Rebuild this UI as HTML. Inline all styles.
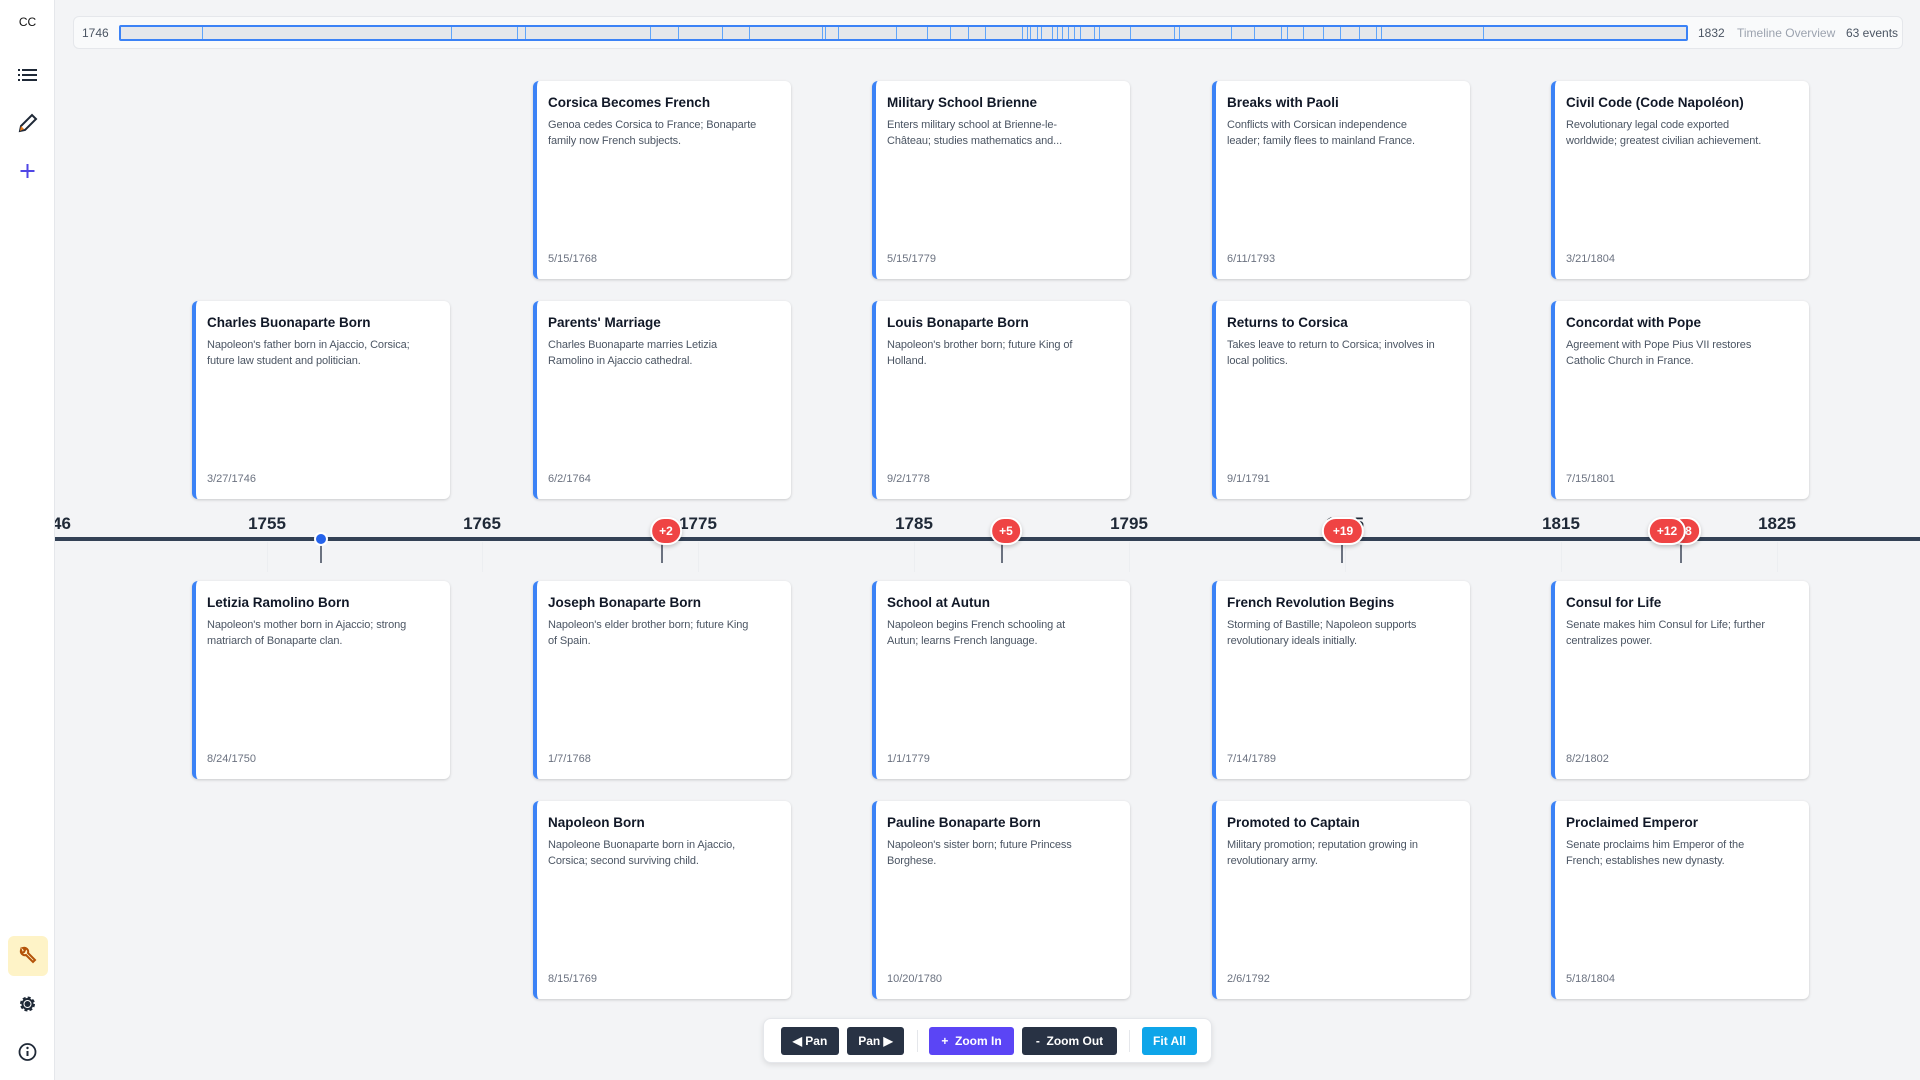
<!DOCTYPE html>
<html><head><meta charset="utf-8"><style>
*{box-sizing:border-box;margin:0;padding:0}
body{width:1920px;height:1080px;background:#f3f4f6;font-family:"Liberation Sans",sans-serif;position:relative;overflow:hidden}
.side{position:absolute;left:0;top:0;width:55px;height:1080px;background:#fff;border-right:1px solid #e5e7eb;z-index:5}
.ic{position:absolute;left:0;width:55px;text-align:center}
.ov{position:absolute;left:73px;top:16px;width:1830px;height:33px;background:#f9fafb;border:1px solid #e5e7eb;border-radius:6px}
.track{position:absolute;left:45px;top:8px;width:1569px;height:16px;background:#e5e7eb;border:2px solid #3b82f6;border-radius:2px}
.track i{position:absolute;top:0;width:1px;height:12px;background:#60a5fa}
.ovt{position:absolute;top:9px;font-size:12px;color:#4b5563}
.card{position:absolute;width:258px;height:198px;background:#fff;border-left:4px solid #3b82f6;border-radius:6px;box-shadow:0 1px 3px rgba(0,0,0,.12),0 1px 2px rgba(0,0,0,.06);padding:0 0 0 11px}
.card h3{position:absolute;top:14px;left:11px;font-size:13.5px;font-weight:bold;color:#111827;white-space:nowrap}
.card p{position:absolute;top:36px;left:11px;font-size:11px;line-height:16px;color:#4b5563;white-space:nowrap;letter-spacing:-.1px}
.card span{position:absolute;top:172px;left:11px;font-size:11px;color:#6b7280}
.tl{position:absolute;left:55px;top:480px;width:1865px;height:120px;overflow:hidden}
.yr{position:absolute;top:34px;font-size:17px;font-weight:bold;color:#1f2937;transform:translateX(-50%)}
.vt{position:absolute;top:62px;width:1px;height:30px;background:#eceef1}
.line{position:absolute;left:0;top:57px;width:100%;height:4px;background:#334155}
.stem{position:absolute;top:60px;width:2px;height:23px;background:#6b7280}
.bd{position:absolute;top:37px;height:28px;padding:0 7px;background:#ef4444;color:#fff;font-size:12px;font-weight:bold;line-height:24px;border:2px solid #fff;border-radius:14px;transform:translateX(-50%);box-shadow:0 2px 4px rgba(0,0,0,.2)}
.ctl{position:absolute;left:763px;top:1018px;width:449px;height:45px;background:#fff;border:1px solid #e5e7eb;border-radius:8px;box-shadow:0 2px 6px rgba(0,0,0,.1)}
.b{position:absolute;top:8px;height:28px;border-radius:3px;color:#fff;font-size:12px;font-weight:bold;text-align:center;line-height:28px}
.dv{position:absolute;top:11px;width:1px;height:22px;background:#e5e7eb}
</style></head><body>
<div class="side">
<div class="ic" style="top:15px;font-size:12px;color:#111">CC</div>
<svg class="ic" style="top:67px" height="16" viewBox="0 0 55 16"><g fill="#1f2937"><rect x="18" y="2" width="2" height="2"/><rect x="18" y="7" width="2" height="2"/><rect x="18" y="12" width="2" height="2"/><rect x="22" y="2" width="15" height="2"/><rect x="22" y="7" width="15" height="2"/><rect x="22" y="12" width="15" height="2"/></g></svg>
<svg class="ic" style="top:113px" height="20" viewBox="0 0 55 20"><path d="M20 18l1-5 11-11 4 4-11 11z" fill="none" stroke="#1f2937" stroke-width="2"/><path d="M20 18l1-5 3 3z" fill="#ea7b1c"/></svg>
<svg class="ic" style="top:163px" height="16" viewBox="0 0 55 16"><path d="M27.5 1v14M20.5 8h14" stroke="#4f46e5" stroke-width="2"/></svg>
<div style="position:absolute;left:8px;top:936px;width:40px;height:40px;background:#fef3c7;border-radius:6px"></div>
<svg class="ic" style="top:946px" height="20" viewBox="0 0 55 20"><path d="M21 4a4 4 0 0 0 5 5l7 7 2-2-7-7a4 4 0 0 0-5-5l2 2-1 2-2 1z" fill="none" stroke="#b45309" stroke-width="2"/></svg>
<svg class="ic" style="top:994px" height="20" viewBox="0 0 55 20"><circle cx="27.5" cy="10" r="3" fill="#1f2937"/><circle cx="27.5" cy="10" r="6.5" fill="none" stroke="#1f2937" stroke-width="2" stroke-dasharray="3 2.1"/><circle cx="27.5" cy="10" r="5" fill="none" stroke="#1f2937" stroke-width="2"/></svg>
<svg class="ic" style="top:1042px" height="20" viewBox="0 0 55 20"><circle cx="27.5" cy="10" r="8" fill="none" stroke="#1f2937" stroke-width="1.8"/><path d="M27.5 9v5" stroke="#1f2937" stroke-width="2"/><circle cx="27.5" cy="6" r="1.2" fill="#1f2937"/></svg>
</div>

<div class="ov">
<div class="ovt" style="left:8px">1746</div>
<div class="track">
<i style="left:5.2%"></i><i style="left:21.1%"></i><i style="left:25.3%"></i><i style="left:25.8%"></i><i style="left:33.8%"></i><i style="left:35.6%"></i><i style="left:38.4%"></i><i style="left:40.1%"></i><i style="left:44.8%"></i><i style="left:45%"></i><i style="left:45.8%"></i><i style="left:49.5%"></i><i style="left:51.5%"></i><i style="left:53%"></i><i style="left:54.1%"></i><i style="left:55.2%"></i><i style="left:57.6%"></i><i style="left:57.9%"></i><i style="left:58.1%"></i><i style="left:58.5%"></i><i style="left:58.8%"></i><i style="left:59.5%"></i><i style="left:59.8%"></i><i style="left:60.1%"></i><i style="left:60.5%"></i><i style="left:60.9%"></i><i style="left:61.3%"></i><i style="left:62.2%"></i><i style="left:62.5%"></i><i style="left:64.5%"></i><i style="left:67.3%"></i><i style="left:67.6%"></i><i style="left:70.9%"></i><i style="left:72.4%"></i><i style="left:74.1%"></i><i style="left:74.5%"></i><i style="left:75.5%"></i><i style="left:76.8%"></i><i style="left:77.9%"></i><i style="left:79.1%"></i><i style="left:80.2%"></i><i style="left:80.5%"></i><i style="left:87%"></i>
</div>
<div class="ovt" style="left:1624px">1832</div>
<div class="ovt" style="left:1663px;color:#9ca3af">Timeline Overview</div>
<div class="ovt" style="left:1772px">63 events</div>
</div>

<div class="card" style="left:533px;top:81px"><h3>Corsica Becomes French</h3><p>Genoa cedes Corsica to France; Bonaparte<br>family now French subjects.</p><span>5/15/1768</span></div>
<div class="card" style="left:872px;top:81px"><h3>Military School Brienne</h3><p>Enters military school at Brienne-le-<br>Château; studies mathematics and...</p><span>5/15/1779</span></div>
<div class="card" style="left:1212px;top:81px"><h3>Breaks with Paoli</h3><p>Conflicts with Corsican independence<br>leader; family flees to mainland France.</p><span>6/11/1793</span></div>
<div class="card" style="left:1551px;top:81px"><h3>Civil Code (Code Napoléon)</h3><p>Revolutionary legal code exported<br>worldwide; greatest civilian achievement.</p><span>3/21/1804</span></div>

<div class="card" style="left:192px;top:301px"><h3>Charles Buonaparte Born</h3><p>Napoleon's father born in Ajaccio, Corsica;<br>future law student and politician.</p><span>3/27/1746</span></div>
<div class="card" style="left:533px;top:301px"><h3>Parents' Marriage</h3><p>Charles Buonaparte marries Letizia<br>Ramolino in Ajaccio cathedral.</p><span>6/2/1764</span></div>
<div class="card" style="left:872px;top:301px"><h3>Louis Bonaparte Born</h3><p>Napoleon's brother born; future King of<br>Holland.</p><span>9/2/1778</span></div>
<div class="card" style="left:1212px;top:301px"><h3>Returns to Corsica</h3><p>Takes leave to return to Corsica; involves in<br>local politics.</p><span>9/1/1791</span></div>
<div class="card" style="left:1551px;top:301px"><h3>Concordat with Pope</h3><p>Agreement with Pope Pius VII restores<br>Catholic Church in France.</p><span>7/15/1801</span></div>

<div class="card" style="left:192px;top:581px"><h3>Letizia Ramolino Born</h3><p>Napoleon's mother born in Ajaccio; strong<br>matriarch of Bonaparte clan.</p><span>8/24/1750</span></div>
<div class="card" style="left:533px;top:581px"><h3>Joseph Bonaparte Born</h3><p>Napoleon's elder brother born; future King<br>of Spain.</p><span>1/7/1768</span></div>
<div class="card" style="left:872px;top:581px"><h3>School at Autun</h3><p>Napoleon begins French schooling at<br>Autun; learns French language.</p><span>1/1/1779</span></div>
<div class="card" style="left:1212px;top:581px"><h3>French Revolution Begins</h3><p>Storming of Bastille; Napoleon supports<br>revolutionary ideals initially.</p><span>7/14/1789</span></div>
<div class="card" style="left:1551px;top:581px"><h3>Consul for Life</h3><p>Senate makes him Consul for Life; further<br>centralizes power.</p><span>8/2/1802</span></div>

<div class="card" style="left:533px;top:801px"><h3>Napoleon Born</h3><p>Napoleone Buonaparte born in Ajaccio,<br>Corsica; second surviving child.</p><span>8/15/1769</span></div>
<div class="card" style="left:872px;top:801px"><h3>Pauline Bonaparte Born</h3><p>Napoleon's sister born; future Princess<br>Borghese.</p><span>10/20/1780</span></div>
<div class="card" style="left:1212px;top:801px"><h3>Promoted to Captain</h3><p>Military promotion; reputation growing in<br>revolutionary army.</p><span>2/6/1792</span></div>
<div class="card" style="left:1551px;top:801px"><h3>Proclaimed Emperor</h3><p>Senate proclaims him Emperor of the<br>French; establishes new dynasty.</p><span>5/18/1804</span></div>

<div class="tl">
<div class="vt" style="left:212px"></div><div class="vt" style="left:427px"></div><div class="vt" style="left:643px"></div><div class="vt" style="left:859px"></div><div class="vt" style="left:1074px"></div><div class="vt" style="left:1290px"></div><div class="vt" style="left:1506px"></div><div class="vt" style="left:1722px"></div>
<div class="yr" style="left:-3px">1746</div>
<div class="yr" style="left:212px">1755</div>
<div class="yr" style="left:427px">1765</div>
<div class="yr" style="left:643px">1775</div>
<div class="yr" style="left:859px">1785</div>
<div class="yr" style="left:1074px">1795</div>
<div class="yr" style="left:1290px">1805</div>
<div class="yr" style="left:1506px">1815</div>
<div class="yr" style="left:1722px">1825</div>
<div class="line"></div>
<div class="stem" style="left:265px"></div>
<div style="position:absolute;left:259px;top:52px;width:14px;height:14px;border-radius:50%;background:#2563eb;border:2px solid #fff"></div>
<div class="stem" style="left:606px"></div><div class="bd" style="left:611px">+2</div>
<div class="stem" style="left:946px"></div><div class="bd" style="left:951px">+5</div>
<div class="stem" style="left:1286px"></div><div class="bd" style="left:1288px;padding:0 9px">+19</div>
<div class="stem" style="left:1625px"></div><div class="bd" style="left:1630px">+8</div><div class="bd" style="left:1612px">+12</div>
</div>

<div class="ctl">
<div class="b" style="left:17px;width:58px;background:#283244">◀ Pan</div>
<div class="b" style="left:83px;width:57px;background:#283244">Pan ▶</div>
<div class="dv" style="left:153px"></div>
<div class="b" style="left:165px;width:85px;background:#5b45f5">+&nbsp; Zoom In</div>
<div class="b" style="left:258px;width:95px;background:#283244">-&nbsp; Zoom Out</div>
<div class="dv" style="left:365px"></div>
<div class="b" style="left:378px;width:55px;background:#0ea5e9">Fit All</div>
</div>
</body></html>
